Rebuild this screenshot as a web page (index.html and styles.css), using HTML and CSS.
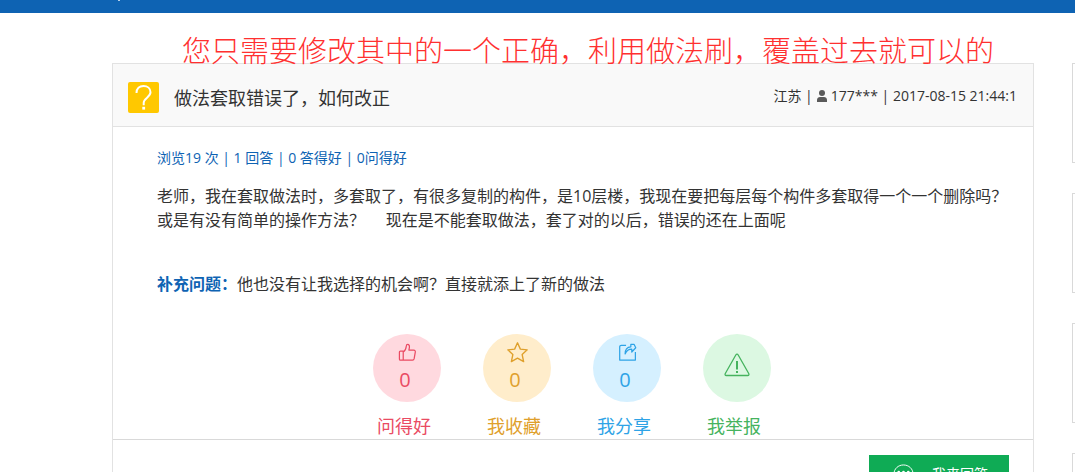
FILE: index.html
```html
<!DOCTYPE html>
<html lang="zh-CN">
<head>
<meta charset="utf-8">
<title>做法套取错误了，如何改正</title>
<link rel="stylesheet" href="styles.css">
</head>
<body>
<header class="topbar"><span class="topbar-mark"></span></header>
<div class="page">
  <main class="main">
    <p class="note">您只需要修改其中的一个正确，利用做法刷，覆盖过去就可以的</p>
    <article class="question">
      <div class="question-head">
        <svg class="badge" viewBox="0 0 31 31" aria-hidden="true">
          <rect width="31" height="31" rx="2" fill="#ffc800"/>
          <path d="M8.500 11C8.500 6.500 11.500 4 15.500 4s7 2.500 7 6.300c0 5-6.800 5.700-6.800 10.500v2.400" fill="none" stroke="#fff" stroke-width="2"/>
          <rect x="14.300" y="24.800" width="2.800" height="2.800" fill="#fff"/>
        </svg>
        <h1 class="title">做法套取错误了，如何改正</h1>
        <div class="meta">
          <span>江苏 |</span>
          <svg class="user" viewBox="0 0 10 12" aria-hidden="true"><circle cx="5" cy="3" r="3"/><path d="M0 12V10C0 8 1.500 7 3 7h4c1.500 0 3 1 3 3v2z"/></svg>
          <span>177*** | 2017-08-15 21:44:1</span>
        </div>
      </div>
      <div class="question-body">
        <p class="stats">浏览19 次 | 1 回答 | 0 答得好 | 0问得好</p>
        <p class="text">老师，我在套取做法时，多套取了，有很多复制的构件，是10层楼，我现在要把每层每个构件多套取得一个一个删除吗？<br>或是有没有简单的操作方法？&nbsp;&nbsp;&nbsp;&nbsp;&nbsp;现在是不能套取做法，套了对的以后，错误的还在上面呢</p>
        <p class="text extra"><strong>补充问题：</strong>他也没有让我选择的机会啊？直接就添上了新的做法</p>
      </div>
      <div class="actions">
        <button class="action good" type="button">
          <span class="disc">
            <svg class="icon" viewBox="0 0 20 20" aria-hidden="true"><path d="M2.500 8.500H5.500V18H2.500C1.800 18 1.500 17.600 1.500 17V9.500C1.500 8.800 1.900 8.500 2.500 8.500zM5.500 9.500C7.800 8.200 8.500 6.500 8.700 3.500 8.800 2.200 9.400 1.500 10.200 1.500c1.500 0 2 1.600 1.800 3L11.500 7.500H16.500c1.400 0 1.900 1 1.700 2.200L17 16.500c-.2 1-.8 1.500-1.700 1.500H5.500"/></svg>
            <span class="count">0</span>
          </span>
          <span class="label">问得好</span>
        </button>
        <button class="action fav" type="button">
          <span class="disc">
            <svg class="icon" viewBox="1 1 18 18" aria-hidden="true"><path d="M10 .8l2.700 6 6.500.7-4.800 4.400 1.400 6.700L10 15.300l-5.800 3.300 1.400-6.700L.8 7.500l6.500-.7z"/></svg>
            <span class="count">0</span>
          </span>
          <span class="label">我收藏</span>
        </button>
        <button class="action share" type="button">
          <span class="disc">
            <svg class="icon" viewBox="0 0 20 20" aria-hidden="true"><path d="M8.500 2.500h-5c-1 0-1.700.5-1.700 1.500v14h16.500V9.500M13.500 1.500H17L18.700 5 14.500 9.500V6.500C11 6.500 9 8 7.500 11.500 7.300 7 9.500 4 13.500 4z"/></svg>
            <span class="count">0</span>
          </span>
          <span class="label">我分享</span>
        </button>
        <button class="action report" type="button">
          <span class="disc">
            <svg class="icon-large" viewBox="0 0 26 24" aria-hidden="true"><path d="M13 1.200c.5 0 .9.300 1.200.8l10.500 18.500c.6 1.200.1 2-1 2H2.300c-1.100 0-1.600-.8-1-2L11.800 2c.3-.5.700-.8 1.200-.8z"/><path d="M13 8v8.500M13 18v2" stroke-width="2"/></svg>
          </span>
          <span class="label">我举报</span>
        </button>
      </div>
      <div class="answer-row">
        <button class="answer" type="button">
          <svg class="bubble" viewBox="0 0 22 22" aria-hidden="true"><path d="M4 17.500C2 15.500 1 13 1 10.500 1 5 5.500 1 11 1s10 4 10 9.500S16.500 20 11 20H3z" fill="none" stroke="#fff"/><g fill="#fff"><circle cx="6" cy="8.500" r="1.400"/><circle cx="11" cy="8.500" r="1.400"/><circle cx="16" cy="8.500" r="1.400"/></g></svg>
          <span>我来回答</span>
        </button>
      </div>
    </article>
  </main>
  <aside class="side">
    <div class="card"></div>
    <div class="card"></div>
    <div class="card"></div>
    <div class="card"></div>
  </aside>
</div>
</body>
</html>
```
FILE: styles.css
```css
* { box-sizing: border-box; }

body {
  margin: 0;
  height: 100vh;
  overflow: hidden;
  background: #fff;
  color: #333;
  font: 16px/24px "Open Sans", "Noto Sans CJK SC", sans-serif;
}

p, h1 { margin: 0; }

button {
  padding: 0;
  border: 0;
  background: none;
  font: inherit;
  cursor: pointer;
}

.topbar {
  height: 13px;
  padding-left: 118px;
  background: #0e63b3;
}

.topbar-mark {
  display: block;
  width: 2px;
  height: 1px;
  background: #b7d0e8;
}

.page {
  display: flex;
  gap: 38px;
  height: calc(100vh - 13px);
  padding-left: 112px;
  overflow: hidden;
}

.main {
  flex: 1;
  min-width: 0;
}

.note {
  padding: 26px 0 0 70px;
  color: #ff3030;
  font-size: 29px;
  font-weight: 300;
  line-height: 24px;
  white-space: nowrap;
}

.question {
  border: 1px solid #e2e2e2;
}

.question-head {
  display: flex;
  align-items: center;
  height: 63px;
  padding: 0 16px 0 15px;
  border-bottom: 1px solid #e2e2e2;
  background: #f9f9f9;
}

.badge {
  width: 31px;
  height: 31px;
  margin-top: 4px;
}

.title {
  flex: 1;
  margin: 6px 0 0 15px;
  font-size: 18px;
  font-weight: 400;
}

.meta {
  display: flex;
  align-items: center;
  gap: 4px;
  margin-top: 2px;
  font-size: 14px;
}

.user {
  width: 10px;
  height: 12px;
  fill: #5a5a5a;
}

.question-body { padding: 19px 16px 0 44px; }

.stats {
  color: #0e63b3;
  font-size: 14px;
}

.text { margin-top: 14px; }

.extra { margin-top: 40px; }

.extra strong { color: #0e63b3; }

.actions {
  display: flex;
  justify-content: center;
  gap: 42px;
  margin-top: 38px;
  padding: 0 2px 1px 0;
  border-bottom: 1px solid #d9d9d9;
}

.action {
  display: flex;
  flex-direction: column;
  align-items: flex-start;
  gap: 12px;
  width: 68px;
}

.disc {
  display: flex;
  flex-direction: column;
  align-items: center;
  width: 68px;
  height: 68px;
  padding-top: 9px;
  border-radius: 50%;
}

.icon {
  width: 19px;
  height: 19px;
  overflow: visible;
}

.icon-large {
  width: 26px;
  height: 24px;
  margin-top: 10px;
}

.icon, .icon-large {
  fill: none;
  stroke: currentColor;
  stroke-width: 1.3;
  stroke-linejoin: round;
}

.count {
  padding-right: 4px;
  font-size: 20px;
  line-height: 36px;
}

.label {
  padding-left: 4px;
  font-size: 18px;
}

.good { color: #ea4b63; }
.good .disc { background: #ffd9df; }
.fav { color: #dfa02c; }
.fav .disc { background: #ffedcb; }
.share { color: #2ea3e6; }
.share .disc { background: #d5f0ff; }
.report { color: #45b35e; }
.report .disc { background: #dcf8e2; }

.answer-row {
  display: flex;
  justify-content: flex-end;
  padding: 15px 24px 20px;
}

.answer {
  display: flex;
  align-items: center;
  gap: 18px;
  width: 140px;
  height: 38px;
  padding-left: 24px;
  background: #0fab55;
  color: #fff;
  font-size: 14px;
}

.bubble {
  width: 21px;
  height: 21px;
}

.side {
  display: flex;
  flex: 0 0 3px;
  flex-direction: column;
  gap: 30px;
  min-width: 0;
  padding-top: 50px;
}

.card {
  flex: none;
  width: 240px;
  height: 100px;
  border: 1px solid #d9d9d9;
}
```
